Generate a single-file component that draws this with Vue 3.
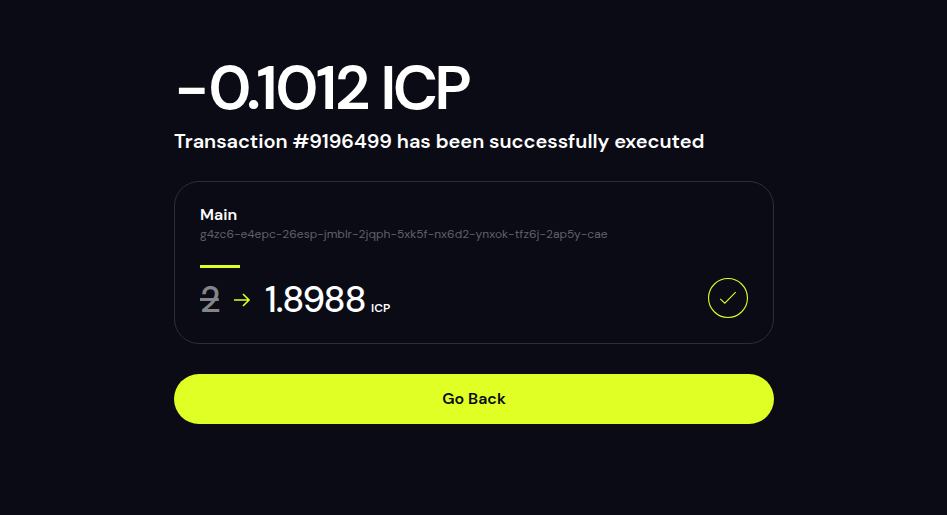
<script setup>
const transaction = {
  sign: '−',
  delta: '0.1012',
  unit: 'ICP',
  message: 'Transaction #9196499 has been successfully executed',
  account: 'Main',
  principal: 'g4zc6-e4epc-26esp-jmblr-2jqph-5xk5f-nx6d2-ynxok-tfz6j-2ap5y-cae',
  before: '2',
  after: '1.8988',
}
</script>

<template>
  <main class="page">
    <h1 class="amount"><span class="sign">{{ transaction.sign }}</span>{{ transaction.delta }} <span class="unit">{{ transaction.unit }}</span></h1>
    <h2 class="message">{{ transaction.message }}</h2>
    <section class="card">
      <p class="name">{{ transaction.account }}</p>
      <p class="principal">{{ transaction.principal }}</p>
      <div class="accent"></div>
      <div class="balance">
        <span class="before">{{ transaction.before }}</span>
        <svg class="arrow" viewBox="0 0 18 16" width="18" height="16" fill="none" stroke="currentColor" stroke-width="1.6">
          <path d="M0 8H15.5M9 2L15 8L9 14" />
        </svg>
        <span class="after">{{ transaction.after }}</span>
        <span class="ticker">{{ transaction.unit }}</span>
        <span class="status">
          <svg viewBox="0 0 40 40" width="40" height="40" fill="none" stroke="currentColor" stroke-width="1.1">
            <circle cx="20" cy="20" r="19.45" />
            <path d="M12.2 20.8L16.8 25.2L27.7 14.2" />
          </svg>
        </span>
      </div>
    </section>
    <button class="back">Go Back</button>
  </main>
</template>

<style>
body {
  margin: 0;
  background: #0a0b15;
}
</style>

<style scoped>
.page {
  box-sizing: border-box;
  width: 600px;
  height: 515px;
  margin-left: 174px;
  padding-top: 56px;
  color: #fff;
  font-family: "DM Sans", Inter, sans-serif;
}
h1, h2, p { margin: 0; }
.amount {
  height: 64px;
  font-size: 62px;
  line-height: 64px;
  font-weight: 600;
  letter-spacing: -2.7px;
  white-space: nowrap;
}
.sign { letter-spacing: -1.2px; }
.unit { letter-spacing: -3.7px; }
.message {
  margin-top: 7px;
  height: 28px;
  font-size: 20px;
  line-height: 29px;
  font-weight: 600;
  letter-spacing: -0.02px;
  white-space: nowrap;
}
.card {
  box-sizing: border-box;
  height: 163px;
  margin-top: 26px;
  padding: 24px 25px 0;
  border: 1px solid #2d2e37;
  border-radius: 25px;
}
.name {
  height: 18px;
  font-size: 16px;
  line-height: 18px;
  font-weight: 600;
}
.principal {
  height: 20px;
  font-size: 12px;
  line-height: 20px;
  letter-spacing: 0.016px;
  color: #60616a;
  white-space: nowrap;
}
.accent {
  width: 40px;
  height: 3px;
  margin-top: 21px;
  background: #dfff25;
}
.balance {
  display: flex;
  height: 40px;
  margin-top: 10px;
  line-height: 40px;
}
.before {
  width: 20px;
  font-size: 36px;
  font-weight: 500;
  letter-spacing: -2px;
  color: #84858a;
  text-decoration: line-through;
  margin-top: 2px;
}
.arrow {
  margin: 14px 13px 0 14px;
  color: #dfff25;
}
.after {
  width: 106px;
  font-size: 36px;
  font-weight: 500;
  letter-spacing: -1.1px;
  margin-top: 2px;
}
.ticker {
  font-size: 12px;
  font-weight: 600;
  margin-top: 10px;
}
.status {
  height: 40px;
  margin-left: auto;
  color: #dfff25;
}
.status svg { display: block; }
.back {
  display: block;
  width: 600px;
  height: 50px;
  margin-top: 30px;
  padding: 0;
  border: 0;
  border-radius: 25px;
  background: #dfff25;
  color: #0a0b15;
  font: 600 16px/50px "DM Sans", Inter, sans-serif;
}
</style>
